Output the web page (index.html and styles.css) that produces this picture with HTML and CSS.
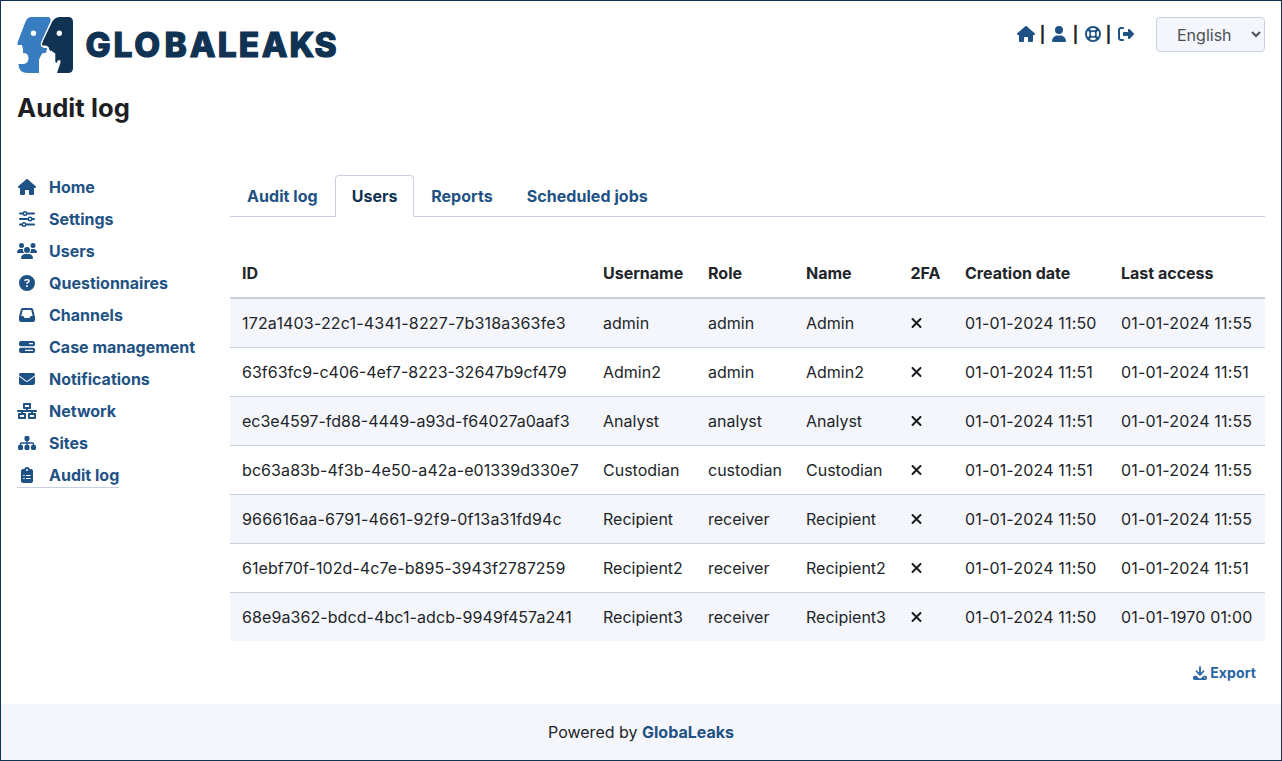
FILE: index.html
```html
<!DOCTYPE html>
<html lang="en">
<head>
<meta charset="utf-8">
<title>GlobaLeaks - Audit log</title>
<link rel="stylesheet" href="styles.css">
</head>
<body>
<svg class="defs" aria-hidden="true">
  <symbol id="home" viewBox="0 0 576 512"><path d="M575.8 255.5c0 18-15 32.1-32 32.1h-32l.7 160.2c0 2.7-.2 5.4-.5 8.1V472c0 22.1-17.9 40-40 40H392c-22.1 0-40-17.9-40-40V384c0-17.7-14.3-32-32-32H256c-17.7 0-32 14.3-32 32v88c0 22.1-17.9 40-40 40H104c-22.1 0-40-17.9-40-40V287.600H32c-18 0-32-14-32-32.100c0-9 3-17 10-24L266.400 8c7-7 15-8 22-8s15 2 21 7L564.800 231.500c8 7 12 15 11 24z"/></symbol>
  <symbol id="user" viewBox="0 0 448 512"><path d="M224 256A128 128 0 1 0 224 0a128 128 0 1 0 0 256zm-45.700 48C79.800 304 0 383.800 0 482.300C0 498.700 13.300 512 29.700 512H418.300c16.400 0 29.700-13.300 29.700-29.700C448 383.800 368.200 304 269.700 304H178.300z"/></symbol>
  <symbol id="ring" viewBox="0 0 512 512"><g fill="none" stroke="currentColor"><circle cx="256" cy="256" r="226" stroke-width="60"/><circle cx="256" cy="256" r="96" stroke-width="48"/><path stroke-width="80" d="M90 90l98 98M422 90l-98 98M90 422l98-98M422 422l-98-98"/></g></symbol>
  <symbol id="exit" viewBox="0 0 512 512"><path d="M377.900 105.900L500.700 228.700c7.200 7.200 11.300 17.100 11.300 27.300s-4.100 20.100-11.300 27.300L377.900 406.100c-6.400 6.400-15 9.900-24 9.900c-18.700 0-33.900-15.200-33.900-33.900V320H192c-17.700 0-32-14.300-32-32v-64c0-17.700 14.300-32 32-32h128v-62.100c0-18.700 15.200-33.900 33.900-33.900c9 0 17.600 3.600 24 9.900zM160 96H96c-17.700 0-32 14.300-32 32v256c0 17.700 14.300 32 32 32h64c17.700 0 32 14.300 32 32s-14.300 32-32 32H96c-53 0-96-43-96-96V128C0 75 43 32 96 32h64c17.700 0 32 14.300 32 32s-14.300 32-32 32z"/></symbol>
  <symbol id="sliders" viewBox="0 0 512 512"><g fill="none" stroke="currentColor" stroke-width="60" stroke-linecap="round"><path d="M30 80h90M270 80h212M30 256h240M425 256h57M30 432h55M240 432h242"/><circle cx="192" cy="80" r="56" stroke-width="48"/><circle cx="352" cy="256" r="56" stroke-width="48"/><circle cx="160" cy="432" r="56" stroke-width="48"/></g></symbol>
  <symbol id="users" viewBox="0 0 640 512"><circle cx="144" cy="80" r="80"/><circle cx="512" cy="80" r="80"/><circle cx="320" cy="224" r="96"/><path d="M0 299c0-59 48-107 107-107h42c16 0 31 4 45 10c-4 30 0 80 42 118H21c-12 0-21-9-21-21zM640 299c0-59-48-107-107-107h-42c-16 0-31 4-45 10c4 30 0 80-42 118h215c12 0 21-9 21-21zM128 485c0-74 60-133 133-133h118c73 0 133 60 133 133c0 15-12 27-27 27H155c-15 0-27-12-27-27z"/></symbol>
  <symbol id="question" viewBox="0 0 512 512"><path fill-rule="evenodd" d="M256 512A256 256 0 1 0 256 0a256 256 0 1 0 0 512zM169.800 165.300c7.900-22.300 29.100-37.300 52.800-37.300h58.300c34.900 0 63.100 28.300 63.100 63.100c0 22.600-12.100 43.500-31.700 54.800L280 264.400c-.2 13-10.900 23.600-24 23.600c-13.300 0-24-10.700-24-24V250.500c0-8.600 4.600-16.500 12.100-20.800l44.300-25.400c4.700-2.700 7.600-7.700 7.600-13.100c0-8.400-6.800-15.100-15.100-15.100H222.600c-3.400 0-6.400 2.100-7.500 5.300l-.4 1.200c-4.400 12.500-18.200 19-30.600 14.600s-19-18.200-14.600-30.600zM224 352a32 32 0 1 1 64 0 32 32 0 1 1-64 0z"/></symbol>
  <symbol id="inbox" viewBox="0 0 512 512"><path fill-rule="evenodd" d="M121 32C91.600 32 66 52 58.900 80.500L1.900 308.400C.6 313.500 0 318.700 0 323.900V416c0 35.300 28.700 64 64 64H448c35.300 0 64-28.700 64-64V323.900c0-5.200-.6-10.400-1.900-15.500l-57-227.900C446 52 420.400 32 391 32H121zm0 64H391l48 192H387.800c-12.100 0-23.200 6.800-28.600 17.700l-14.300 28.600c-5.400 10.800-16.500 17.700-28.600 17.700H195.800c-12.100 0-23.200-6.800-28.600-17.700l-14.300-28.600c-5.400-10.800-16.500-17.700-28.600-17.700H73L121 96z"/></symbol>
  <symbol id="cases" viewBox="0 0 512 512"><path fill-rule="evenodd" d="M64 64H448a64 64 0 0 1 64 64v48a56 56 0 0 1-56 56H56a56 56 0 0 1-56-56V128A64 64 0 0 1 64 64zM320 128v40h128v-40zM56 280H456a56 56 0 0 1 56 56v48a64 64 0 0 1-64 64H64a64 64 0 0 1-64-64V336a56 56 0 0 1 56-56zM192 344v40h256v-40z"/></symbol>
  <symbol id="mail" viewBox="0 0 512 512"><path d="M48 64C21.500 64 0 85.500 0 112c0 15.100 7.100 29.300 19.200 38.400L236.800 313.600c11.400 8.500 27 8.500 38.400 0L492.800 150.400c12.100-9.100 19.200-23.300 19.200-38.400c0-26.500-21.500-48-48-48H48zM0 176V384c0 35.300 28.700 64 64 64H448c35.300 0 64-28.700 64-64V176L294.400 339.200c-22.800 17.100-54 17.100-76.800 0L0 176z"/></symbol>
  <symbol id="network" viewBox="0 0 640 512"><g fill="none" stroke="currentColor" stroke-width="62" stroke-linejoin="round"><rect x="223" y="31" width="194" height="130"/><rect x="63" y="351" width="194" height="130"/><rect x="383" y="351" width="194" height="130"/><path stroke-linecap="round" d="M31 256h578M320 165v91M160 256v90M480 256v90"/></g></symbol>
  <symbol id="sitemap" viewBox="0 0 576 512"><path d="M208 80c0-26.500 21.500-48 48-48h64c26.500 0 48 21.500 48 48v64c0 26.500-21.500 48-48 48h-8v40H464c30.900 0 56 25.100 56 56v32h8c26.500 0 48 21.500 48 48v64c0 26.500-21.500 48-48 48H464c-26.500 0-48-21.500-48-48V368c0-26.500 21.500-48 48-48h8V288c0-4.400-3.600-8-8-8H312v40h8c26.500 0 48 21.500 48 48v64c0 26.500-21.500 48-48 48H256c-26.500 0-48-21.500-48-48V368c0-26.500 21.500-48 48-48h8V280H112c-4.400 0-8 3.600-8 8v32h8c26.500 0 48 21.500 48 48v64c0 26.500-21.500 48-48 48H48c-26.500 0-48-21.500-48-48V368c0-26.500 21.500-48 48-48h8V288c0-30.900 25.100-56 56-56H264V192h-8c-26.500 0-48-21.500-48-48V80z"/></symbol>
  <symbol id="clipboard" viewBox="0 0 384 512"><path fill-rule="evenodd" d="M102 64C115 27 150 0 192 0s77 27 90 64h38c35 0 64 29 64 64v320c0 35-29 64-64 64H64c-35 0-64-29-64-64V128c0-35 29-64 64-64zM192 64a32 32 0 1 0 0 64 32 32 0 1 0 0-64zM72 272a24 24 0 1 0 48 0 24 24 0 1 0-48 0zM160 256v32h144v-32zM72 368a24 24 0 1 0 48 0 24 24 0 1 0-48 0zM160 352v32h144v-32z"/></symbol>
  <symbol id="download" viewBox="0 0 512 512"><path fill="none" stroke="currentColor" stroke-width="64" stroke-linecap="round" stroke-linejoin="round" d="M256 32v290M128 192l128 130 128-130"/><path fill-rule="evenodd" d="M64 352h52l92 84c28 28 68 28 96 0l92-84h52c35 0 64 29 64 64v32c0 35-29 64-64 64H64c-35 0-64-29-64-64v-32c0-35 29-64 64-64zM432 408a24 24 0 1 0 0 48 24 24 0 1 0 0-48z"/></symbol>
  <symbol id="cross" viewBox="0 0 384 512"><path d="M342.600 150.600c12.500-12.500 12.500-32.800 0-45.300s-32.800-12.500-45.300 0L192 210.700 86.600 105.400c-12.500-12.500-32.800-12.500-45.300 0s-12.500 32.800 0 45.300L146.700 256 41.400 361.400c-12.500 12.500-12.500 32.800 0 45.300s32.800 12.500 45.300 0L192 301.300 297.400 406.600c12.500 12.500 32.800 12.500 45.300 0s12.500-32.800 0-45.300L237.300 256 342.600 150.600z"/></symbol>
</svg>
<div class="page">
  <header class="header">
    <svg class="logo" viewBox="0 0 322 56" role="img" aria-label="GlobaLeaks">
      <path fill="#377dc0" fill-rule="evenodd" d="M14 0H30.500C33.500 0 34.500 2.500 33 5.500L24.200 25Q23 28 24.500 29.500L27 31H30.300L29.500 33.500V35.500L25 36.500L22 42.500V56H11Q1.500 56 1.500 47H7Q11.500 46 11.500 41Q11.500 36 6 36V32L5 28H.5Q0 25 1.500 23L8 6Q10 0 14 0zM16.500 13.500a2.700 2.700 0 1 0 0 5.400 2.700 2.700 0 0 0 0-5.400z"/>
      <path fill="#103253" fill-rule="evenodd" d="M43 0H51Q56 0 56 5V51Q56 56 51 56H40L43.500 45.500V43.500Q41 42 39.500 46L38.300 45V36.500L36 35L34.500 33.500L33 34L31.500 30L29 28.500H25.500Q24.500 27 26 24L35 5Q38 0 43 0zM42.300 13.500a2.700 2.700 0 1 0 0 5.400 2.700 2.700 0 0 0 0-5.400z"/>
      <text class="logo-text" x="68.500 96.500 117.300 147.500 172.800 200.800 221.800 244.800 272.500 297.600" y="39.800">GLOBALEAKS</text>
    </svg>
    <nav class="tools">
      <svg class="icon w18"><use href="#home"/></svg><span>|</span>
      <svg class="icon w14"><use href="#user"/></svg><span>|</span>
      <svg class="icon w16"><use href="#ring"/></svg><span>|</span>
      <svg class="icon w16"><use href="#exit"/></svg>
      <select class="lang"><option>English</option></select>
    </nav>
  </header>
  <h1 class="title">Audit log</h1>
  <div class="body">
    <nav class="side">
      <a><svg class="icon"><use href="#home"/></svg>Home</a>
      <a><svg class="icon"><use href="#sliders"/></svg>Settings</a>
      <a><svg class="icon"><use href="#users"/></svg>Users</a>
      <a><svg class="icon"><use href="#question"/></svg>Questionnaires</a>
      <a><svg class="icon"><use href="#inbox"/></svg>Channels</a>
      <a><svg class="icon"><use href="#cases"/></svg>Case management</a>
      <a><svg class="icon"><use href="#mail"/></svg>Notifications</a>
      <a><svg class="icon"><use href="#network"/></svg>Network</a>
      <a><svg class="icon"><use href="#sitemap"/></svg>Sites</a>
      <a class="current"><svg class="icon"><use href="#clipboard"/></svg>Audit log</a>
    </nav>
    <main class="main">
      <div class="tabs"><a>Audit log</a><a class="active">Users</a><a>Reports</a><a>Scheduled jobs</a></div>
      <table class="table">
        <colgroup><col class="c-id"><col class="c-user"><col class="c-role"><col class="c-name"><col class="c-2fa"><col class="c-date"><col class="c-date"></colgroup>
        <thead><tr><th>ID</th><th>Username</th><th>Role</th><th>Name</th><th>2FA</th><th>Creation date</th><th>Last access</th></tr></thead>
        <tbody>
          <tr><td class="wide">172a1403-22c1-4341-8227-7b318a363fe3</td><td>admin</td><td>admin</td><td>Admin</td><td><svg class="icon x"><use href="#cross"/></svg></td><td>01-01-2024 11:50</td><td>01-01-2024 11:55</td></tr>
          <tr><td>63f63fc9-c406-4ef7-8223-32647b9cf479</td><td>Admin2</td><td>admin</td><td>Admin2</td><td><svg class="icon x"><use href="#cross"/></svg></td><td>01-01-2024 11:51</td><td>01-01-2024 11:51</td></tr>
          <tr><td>ec3e4597-fd88-4449-a93d-f64027a0aaf3</td><td>Analyst</td><td>analyst</td><td>Analyst</td><td><svg class="icon x"><use href="#cross"/></svg></td><td>01-01-2024 11:51</td><td>01-01-2024 11:55</td></tr>
          <tr><td class="semi">bc63a83b-4f3b-4e50-a42a-e01339d330e7</td><td>Custodian</td><td>custodian</td><td>Custodian</td><td><svg class="icon x"><use href="#cross"/></svg></td><td>01-01-2024 11:51</td><td>01-01-2024 11:55</td></tr>
          <tr><td class="wide">966616aa-6791-4661-92f9-0f13a31fd94c</td><td>Recipient</td><td>receiver</td><td>Recipient</td><td><svg class="icon x"><use href="#cross"/></svg></td><td>01-01-2024 11:50</td><td>01-01-2024 11:55</td></tr>
          <tr><td class="semi">61ebf70f-102d-4c7e-b895-3943f2787259</td><td>Recipient2</td><td>receiver</td><td>Recipient2</td><td><svg class="icon x"><use href="#cross"/></svg></td><td>01-01-2024 11:50</td><td>01-01-2024 11:51</td></tr>
          <tr><td class="semi">68e9a362-bdcd-4bc1-adcb-9949f457a241</td><td>Recipient3</td><td>receiver</td><td>Recipient3</td><td><svg class="icon x"><use href="#cross"/></svg></td><td>01-01-2024 11:50</td><td>01-01-1970 01:00</td></tr>
        </tbody>
      </table>
      <a class="export"><svg class="icon w14"><use href="#download"/></svg>Export</a>
    </main>
  </div>
  <footer class="footer">Powered by&nbsp;<a>GlobaLeaks</a></footer>
</div>
</body>
</html>
```
FILE: styles.css
```css
* { box-sizing: border-box; }
body { margin: 0; font: 16px/24px Inter, sans-serif; color: #212529; background: #fff; }
.defs { display: none; }
.page { height: 761px; border: 1px solid #103253; display: flex; flex-direction: column; }
.icon { fill: currentColor; height: 16px; width: 20px; flex: none; display: block; }
.w18 { width: 18px; }
.w16 { width: 16px; }
.w14 { width: 14px; }
.header { display: flex; justify-content: space-between; align-items: flex-start; padding: 16px 16px 0; height: 72px; }
.logo { width: 322px; height: 56px; flex: none; }
.logo-text { font: 800 33.500px Inter, sans-serif; fill: #103253; stroke: #103253; stroke-width: 1.100px; }
.tools { display: flex; align-items: flex-start; color: #1f5284; }
.tools .icon { margin-top: 9px; }
.tools span { color: #212529; font-size: 16px; line-height: 20px; font-weight: 700; width: 15px; margin-top: 7px; text-align: center; }
.tools .w14 { margin-left: 2px; margin-right: 2px; }
.tools .w16 { margin-left: 2px; }
.lang { margin-left: 22px; width: 109px; height: 35px; border: 1px solid #c7d1e0; border-radius: 4px; background: #f5f6fb; color: #495057; font: 16px Inter, sans-serif; padding: 0 0 0 16px; }
.title { margin: 19px 16px 0; font-size: 25.600px; line-height: 31px; letter-spacing: .06px; font-weight: 700; color: #1d1f25; }
.body { display: flex; margin-top: 52px; padding: 0 16px; height: 529px; }
.side { width: 213px; flex: none; display: flex; flex-direction: column; align-items: flex-start; }
.side a { display: flex; align-items: center; gap: 12px; height: 24px; margin-bottom: 8px; font-weight: 700; color: #1f5284; }
.side .current { height: 25px; border-bottom: 1px solid #c7d1e0; }
.main { flex: 1; display: flex; flex-direction: column; }
.tabs { display: flex; height: 42px; border-bottom: 1px solid #c7d1e0; font-weight: 700; letter-spacing: .05px; color: #1f5284; }
.tabs a { height: 42px; padding: 8px 16px; border: 1px solid transparent; }
.tabs .active { color: #103253; background: #fff; border-color: #c7d1e0 #c7d1e0 #fff; border-radius: 4px 4px 0 0; padding-right: 15.500px; }
.table { width: 1035px; table-layout: fixed; border-collapse: separate; border-spacing: 0; margin-top: 32px; color: #212529; }
.c-id { width: 361px; }
.c-user { width: 105px; }
.c-role { width: 98px; }
.c-name { width: 104.500px; }
.c-2fa { width: 54.500px; }
.c-date { width: 156px; }
.table th { height: 50px; padding: 0 12px; text-align: left; font-weight: 700; border-bottom: 2px solid #c7d1e0; white-space: nowrap; }
.table td { height: 49px; padding: 0 12px; border-bottom: 1px solid #c7d1e0; white-space: nowrap; }
.table td:nth-child(n+6) { letter-spacing: .16px; }
.table .wide { letter-spacing: .18px; }
.table .semi { letter-spacing: .08px; }
.table tbody tr:nth-child(odd) { background: #f5f6fb; }
.table tbody tr:last-child td { border-bottom: 0; height: 48px; }
.table .x { width: 13px; margin-left: -.5px; color: #1b1d20; }
.export { align-self: flex-end; display: flex; align-items: center; gap: 3px; margin: 21px 9px 0 0; font-size: 14px; line-height: 21px; font-weight: 700; letter-spacing: .1px; color: #2866a3; }
.footer { flex: 1; display: flex; align-items: center; justify-content: center; background: #f5f6fb; }
.footer a { font-weight: 700; color: #1f5284; }
```
